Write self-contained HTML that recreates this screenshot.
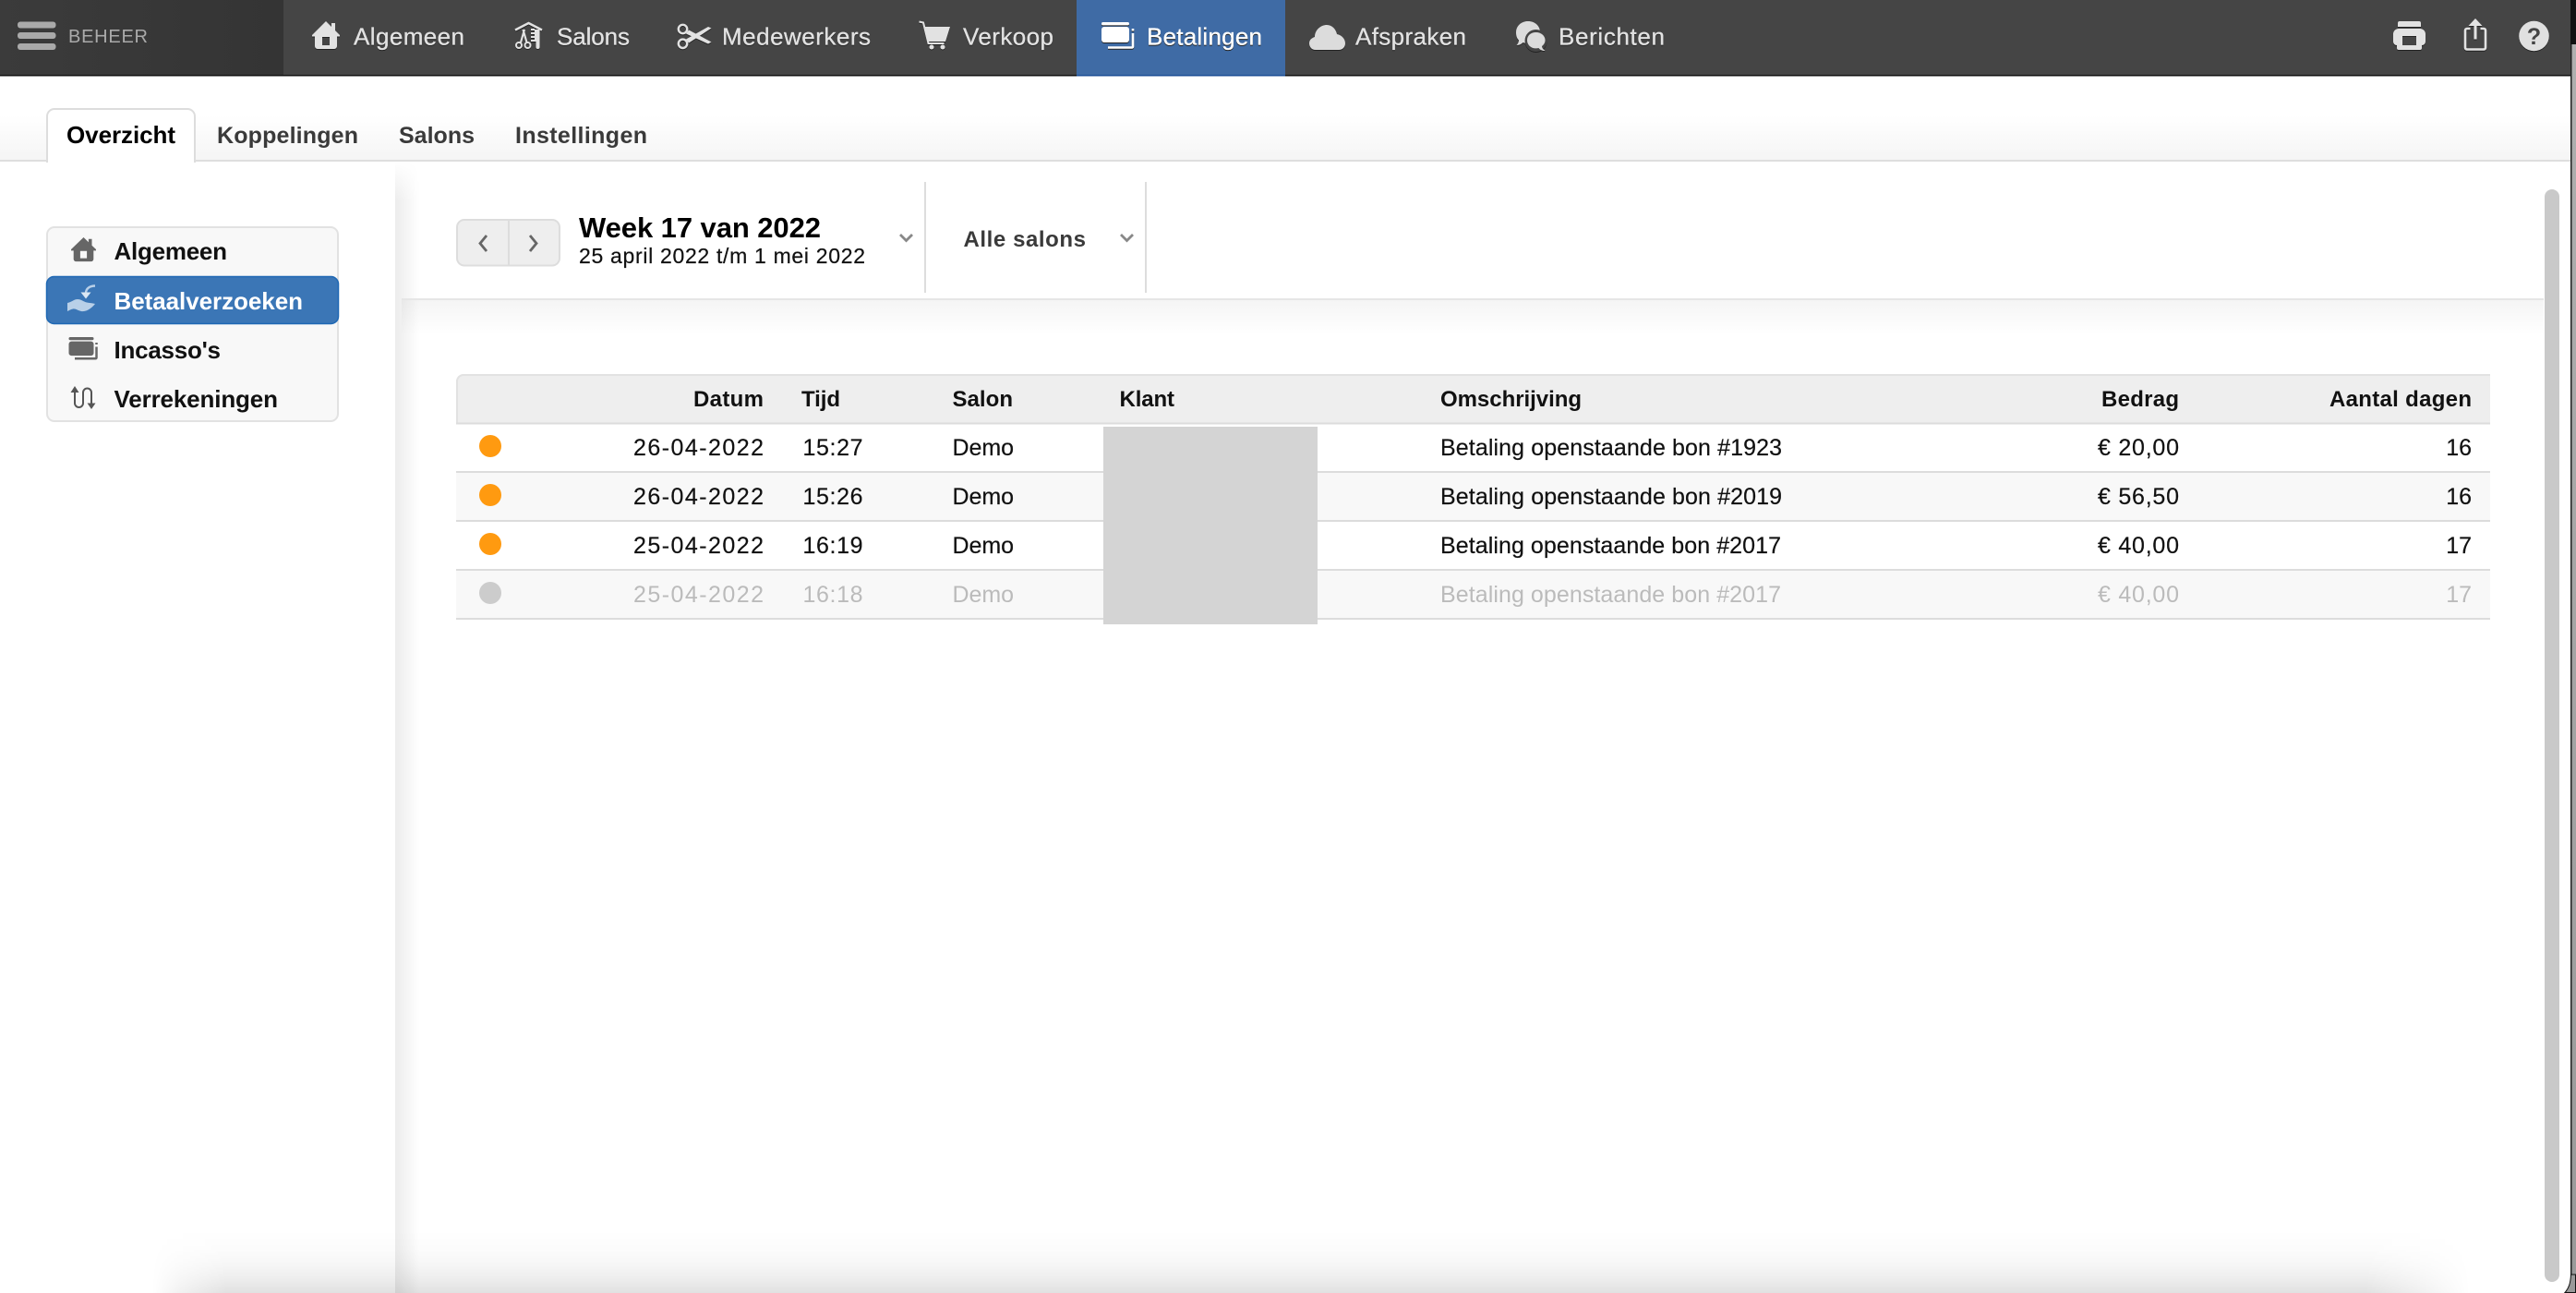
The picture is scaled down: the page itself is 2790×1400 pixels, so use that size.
<!DOCTYPE html>
<html lang="nl">
<head>
<meta charset="utf-8">
<title>Betalingen - Overzicht</title>
<style>
html,body{margin:0;padding:0;width:2790px;height:1400px;overflow:hidden;background:#fff}
svg{display:block;position:absolute;left:0;top:0}
text{font-family:"Liberation Sans",Arial,sans-serif;font-size:25px;fill:#111;stroke:currentColor;stroke-width:0}
.nav text{font-size:26px;fill:#e2e2e2;stroke:#e2e2e2;stroke-width:.3}
.navshadow{filter:drop-shadow(0 1px 0 #222)}
.tab{font-size:25px;font-weight:bold;fill:#3a3a3a}
.side{font-size:26px;font-weight:bold;fill:#111}
.th{font-size:24px;font-weight:bold;fill:#111}
.row{stroke:#111;stroke-width:.2}
.off{fill:#bbb}
</style>
</head>
<body>
<svg width="2790" height="1400" viewBox="0 0 2790 1400" xmlns="http://www.w3.org/2000/svg">
<defs>
<linearGradient id="tabbg" x1="0" y1="0" x2="0" y2="1"><stop offset="0" stop-color="#fff"/><stop offset="1" stop-color="#f5f5f5"/></linearGradient>
<linearGradient id="lefttop" x1="0" y1="0" x2="1" y2="0"><stop offset="0" stop-color="#3b3b3b"/><stop offset="1" stop-color="#343434"/></linearGradient>
<linearGradient id="tool" x1="0" y1="0" x2="0" y2="1"><stop offset="0" stop-color="#000" stop-opacity=".04"/><stop offset="1" stop-color="#000" stop-opacity="0"/></linearGradient>
<linearGradient id="ls" x1="0" y1="0" x2="1" y2="0"><stop offset="0" stop-color="#000" stop-opacity=".075"/><stop offset="1" stop-color="#000" stop-opacity="0"/></linearGradient>
<linearGradient id="lsmask" x1="0" y1="0" x2="0" y2="1"><stop offset="0" stop-color="#000"/><stop offset=".035" stop-color="#fff"/><stop offset="1" stop-color="#fff"/></linearGradient>
<mask id="lm" maskUnits="userSpaceOnUse" x="420" y="175" width="40" height="1225"><rect x="420" y="175" width="40" height="1225" fill="url(#lsmask)"/></mask>
<linearGradient id="edge" x1="0" y1="0" x2="0" y2="1"><stop offset="0" stop-color="#b0b0b0"/><stop offset="1" stop-color="#999"/></linearGradient>
<linearGradient id="bs" x1="0" y1="0" x2="0" y2="1">
<stop offset="0" stop-color="#000" stop-opacity="0"/>
<stop offset=".3" stop-color="#000" stop-opacity=".012"/>
<stop offset=".55" stop-color="#000" stop-opacity=".035"/>
<stop offset=".78" stop-color="#000" stop-opacity=".072"/>
<stop offset="1" stop-color="#000" stop-opacity=".118"/>
</linearGradient>
<linearGradient id="bsm" x1="0" y1="0" x2="1" y2="0">
<stop offset="0" stop-color="#000"/>
<stop offset=".012" stop-color="#777"/>
<stop offset=".032" stop-color="#fff"/>
<stop offset=".955" stop-color="#fff"/>
<stop offset=".98" stop-color="#777"/>
<stop offset="1" stop-color="#000"/>
</linearGradient>
<mask id="bm" maskUnits="userSpaceOnUse" x="165" y="1332" width="2510" height="68"><rect x="165" y="1332" width="2510" height="68" fill="url(#bsm)"/></mask>
</defs>

<!-- window edge -->
<rect x="2784" y="0" width="6" height="1400" fill="url(#edge)"/>
<rect x="2784" y="0" width="6" height="48" fill="#111"/>
<rect x="2784" y="48" width="1.5" height="1335" fill="#222"/>

<!-- tab strip -->
<rect x="0" y="125" width="2784" height="48" fill="url(#tabbg)"/>
<rect x="0" y="173" width="2784" height="2" fill="#dedede"/>
<path d="M51 175V126a8 8 0 0 1 8-8H203a8 8 0 0 1 8 8V175Z" fill="#fff" stroke="#ddd" stroke-width="2"/>
<rect x="52" y="172" width="158" height="4" fill="#fff"/>
<text class="tab" x="72" y="155" textLength="118" style="fill:#000;font-size:26px">Overzicht</text>
<text class="tab" x="235" y="155" textLength="153">Koppelingen</text>
<text class="tab" x="432" y="155" textLength="82">Salons</text>
<text class="tab" x="558" y="155" textLength="143">Instellingen</text>

<!-- left shadow of content panel -->
<rect x="428" y="175" width="26" height="1225" fill="url(#ls)" mask="url(#lm)"/>

<!-- sidebar -->
<rect x="51" y="246" width="315" height="210" rx="8" fill="#f8f8f8" stroke="#e2e2e2" stroke-width="2"/>
<rect x="50.500" y="299.500" width="316" height="51" rx="8" fill="#3b76b6" stroke="#1f68b4" stroke-width="1.500"/>
<path transform="translate(77 257) scale(.9 .87)" fill="#666" fill-rule="evenodd" d="M15 0L21 6V2h4v8l5 5v1.500h-3V27a3 3 0 0 1-3 3H6a3 3 0 0 1-3-3V16.500H0V15ZM11 17v9h8v-9Z"/>
<text class="side" x="123.500" y="281" textLength="122.500">Algemeen</text>
<!-- pay request icon -->
<path d="M103 309.500c-6 0-10 3-10 8" fill="none" stroke="#b9d0e8" stroke-width="2.400"/>
<path d="M87.500 316.500h11l-5.500 7z" fill="#dbe7f3"/>
<path d="M73 328c4-.5 7-4 11-4 4 0 6 2.500 10 3.500 3 .8 6 .5 9 1.500-3 4-9 9-15 8-4-.8-6-3-9-2.500-2 .3-4 1.500-6 2.500z" fill="#b9d0e8"/>
<text class="side" x="123.500" y="335" textLength="204.500" style="fill:#fff">Betaalverzoeken</text>
<!-- cards icon -->
<g transform="translate(74.500 365)">
<rect width="27" height="3.200" rx="1.600" fill="#666"/><rect y="4.600" width="27" height="15.500" rx="3" fill="#666"/>
<path d="M6.500 23.300H29a1 1 0 0 0 1-1V10.500M30 6v2" fill="none" stroke="#666" stroke-width="2.500"/>
</g>
<text class="side" x="123.500" y="388" textLength="115.500">Incasso's</text>
<!-- verrekeningen icon -->
<path d="M81 424V436.500a4.500 4.500 0 0 0 9 0V425a4.500 4.500 0 0 1 9 0V438" fill="none" stroke="#555" stroke-width="2"/>
<path d="M81 418l4.500 7h-9zM99 443l-4.500-6.500h9z" fill="#555"/>
<text class="side" x="123.500" y="441" textLength="177.500">Verrekeningen</text>

<!-- toolbar -->
<rect x="495" y="238" width="111" height="49.500" rx="8" fill="#eee" stroke="#ddd" stroke-width="2"/>
<rect x="550" y="238" width="2" height="49" fill="#ddd"/>
<path d="M527 255l-7 8.500 7 8.500M574 255l7 8.500-7 8.500" fill="none" stroke="#666" stroke-width="2.800"/>
<text x="627" y="257" textLength="262" style="font-size:31px;font-weight:bold;fill:#000">Week 17 van 2022</text>
<text x="627" y="285" textLength="310" style="font-size:23px;fill:#111;stroke:#111;stroke-width:.2">25 april 2022 t/m 1 mei 2022</text>
<path d="M975 254l6.500 6.500 6.500-6.500" fill="none" stroke="#888" stroke-width="2.800"/>
<rect x="1001" y="197" width="2" height="120" fill="#ddd"/>
<text class="tab" x="1043.500" y="267" textLength="132.500" style="font-size:24px">Alle salons</text>
<path d="M1214 254l6.500 6.500 6.500-6.500" fill="none" stroke="#888" stroke-width="2.800"/>
<rect x="1240" y="197" width="2" height="120" fill="#ddd"/>
<rect x="435" y="323" width="2320" height="2" fill="#e6e6e6"/>
<rect x="435" y="325" width="2320" height="38" fill="url(#tool)"/>

<!-- table -->
<path d="M494 459V413a8 8 0 0 1 8-8H2697V459Z" fill="#eee"/>
<path d="M495 459V413a7 7 0 0 1 7-7H2697" fill="none" stroke="#e2e2e2" stroke-width="2"/>
<rect x="494" y="512" width="2203" height="52" fill="#f8f8f8"/>
<rect x="494" y="618" width="2203" height="52" fill="#f8f8f8"/>
<g fill="#dcdcdc">
<rect x="494" y="457.500" width="2203" height="2"/>
<rect x="494" y="510" width="2203" height="2"/>
<rect x="494" y="563" width="2203" height="2"/>
<rect x="494" y="616" width="2203" height="2"/>
<rect x="494" y="669" width="2203" height="2"/>
</g>
<rect x="1195" y="462" width="232" height="214" fill="#d4d4d4"/>

<text class="th" x="751" y="440" textLength="76">Datum</text>
<text class="th" x="868" y="440" textLength="42">Tijd</text>
<text class="th" x="1031.500" y="440" textLength="65.500">Salon</text>
<text class="th" x="1212.500" y="440" textLength="59.500">Klant</text>
<text class="th" x="1560" y="440" textLength="153">Omschrijving</text>
<text class="th" x="2276" y="440" textLength="84">Bedrag</text>
<text class="th" x="2523" y="440" textLength="154">Aantal dagen</text>

<circle cx="531" cy="483" r="12" fill="#ff9a10"/>
<text class="row" x="686" y="493" textLength="141">26-04-2022</text>
<text class="row" x="869.500" y="493" textLength="65">15:27</text>
<text class="row" x="1031.500" y="493" textLength="66.500">Demo</text>
<text class="row" x="1560" y="493" textLength="370">Betaling openstaande bon #1923</text>
<text class="row" x="2272" y="493" textLength="88">€ 20,00</text>
<text class="row" x="2677" y="493" text-anchor="end">16</text>

<circle cx="531" cy="536" r="12" fill="#ff9a10"/>
<text class="row" x="686" y="546" textLength="141">26-04-2022</text>
<text class="row" x="869.500" y="546" textLength="65">15:26</text>
<text class="row" x="1031.500" y="546" textLength="66.500">Demo</text>
<text class="row" x="1560" y="546" textLength="370">Betaling openstaande bon #2019</text>
<text class="row" x="2272" y="546" textLength="88">€ 56,50</text>
<text class="row" x="2677" y="546" text-anchor="end">16</text>

<circle cx="531" cy="589" r="12" fill="#ff9a10"/>
<text class="row" x="686" y="599" textLength="141">25-04-2022</text>
<text class="row" x="869.500" y="599" textLength="65">16:19</text>
<text class="row" x="1031.500" y="599" textLength="66.500">Demo</text>
<text class="row" x="1560" y="599" textLength="369">Betaling openstaande bon #2017</text>
<text class="row" x="2272" y="599" textLength="88">€ 40,00</text>
<text class="row" x="2677" y="599" text-anchor="end">17</text>

<circle cx="531" cy="642" r="12" fill="#ccc"/>
<text class="off" x="686" y="652" textLength="141">25-04-2022</text>
<text class="off" x="869.500" y="652" textLength="65">16:18</text>
<text class="off" x="1031.500" y="652" textLength="66.500">Demo</text>
<text class="off" x="1560" y="652" textLength="369">Betaling openstaande bon #2017</text>
<text class="off" x="2272" y="652" textLength="88">€ 40,00</text>
<text class="off" x="2677" y="652" text-anchor="end">17</text>

<!-- bottom shadow -->
<rect x="165" y="1332" width="2510" height="68" fill="url(#bs)" mask="url(#bm)"/>

<!-- scrollbar -->
<rect x="2756" y="205" width="16" height="1183" rx="8" fill="#c9c9c9"/>

<!-- window corner -->
<path d="M2784.500 1380C2784 1390 2782 1395 2778 1399.500H2789.500V1380Z" fill="#999" stroke="#111" stroke-width="1"/>

<!-- top nav -->
<rect x="0" y="0" width="2784" height="81" fill="#454545"/>
<rect x="0" y="81" width="2784" height="1.500" fill="#111"/>
<rect x="0" y="0" width="307" height="81" fill="url(#lefttop)"/>
<rect x="1166" y="0" width="226" height="81" fill="#3f6ba5"/>
<rect x="1166" y="81" width="226" height="1.500" fill="#1c4f96"/>
<g fill="#aaa">
<rect x="19" y="23.500" width="41.500" height="7" rx="3"/>
<rect x="19" y="35" width="41.500" height="7" rx="3"/>
<rect x="19" y="47" width="41.500" height="7" rx="3"/>
</g>
<text x="74" y="46" textLength="86" style="font-size:20px;fill:#aaa">BEHEER</text>

<g class="nav navshadow">
<!-- home -->
<path transform="translate(338 23)" fill="#e2e2e2" fill-rule="evenodd" d="M15 0L21 6V2h4v8l5 5v1.500h-3V27a3 3 0 0 1-3 3H6a3 3 0 0 1-3-3V16.500H0V15ZM11 17v9h8v-9Z"/>
<text x="383" y="48.500" textLength="120">Algemeen</text>
<!-- salons -->
<path d="M558 32.500L572.500 25 587 32.500" fill="none" stroke="#e2e2e2" stroke-width="2.500"/>
<path d="M564 46L568 32M570.500 46L566.500 32" fill="none" stroke="#e2e2e2" stroke-width="2.200"/>
<circle cx="562" cy="49" r="3" fill="none" stroke="#e2e2e2" stroke-width="2"/>
<circle cx="571.500" cy="49" r="3" fill="none" stroke="#e2e2e2" stroke-width="2"/>
<path d="M579 32h5.500v19a2 2 0 0 1-4 0v-6H575v-2h4v-2h-4v-2h4v-2h-4v-2h4v-2h-4v-2h4Z" fill="#e2e2e2"/>
<text x="603" y="48.500" textLength="79">Salons</text>
<!-- scissors -->
<circle cx="739.500" cy="31.500" r="4.700" fill="none" stroke="#e2e2e2" stroke-width="2.400"/>
<circle cx="739.500" cy="47.300" r="4.700" fill="none" stroke="#e2e2e2" stroke-width="2.400"/>
<path d="M743 42.500L767 29l3.500 1.500L746 46.500ZM743 36.500L746 32.500 770.500 45.500 767 47.500Z" fill="#e2e2e2"/>
<text x="782" y="48.500" textLength="161">Medewerkers</text>
<!-- cart -->
<path d="M995.500 23.500l4.500 1 5.500 22.500h17" fill="none" stroke="#e2e2e2" stroke-width="2"/>
<path d="M1001 29H1029L1024 45H1005Z" fill="#e2e2e2"/>
<circle cx="1009" cy="51" r="2.500" fill="#e2e2e2"/><circle cx="1021" cy="51" r="2.500" fill="#e2e2e2"/>
<text x="1043" y="48.500" textLength="98">Verkoop</text>
<!-- cards active -->
<g transform="translate(1193 24)">
<rect width="30" height="3.400" rx="1.700" fill="#fff"/><rect y="5" width="30" height="17" rx="3" fill="#fff"/>
<path d="M7 27.500H33a1 1 0 0 0 1-1V12M34 7v2.500" fill="none" stroke="#fff" stroke-width="2.600"/>
</g>
<text x="1242" y="48.500" textLength="125" style="fill:#fff;stroke:#fff">Betalingen</text>
<!-- cloud -->
<path d="M1425 54C1420 54 1418 50 1418 47C1418 43 1421 41 1424 40C1424 32 1431 27 1437 27C1443 27 1447 32 1448 37C1453 38 1457 42 1457 47C1457 51 1454 54 1450 54Z" fill="#dcdcdc"/>
<text x="1468" y="48.500" textLength="120">Afspraken</text>
<!-- chat -->
<path d="M1655 23c7.500 0 13 5 13 12 0 7-5.500 12-13 12-2 0-4-.4-5.500-1-1.500 1.500-4 3-7 3 1.500-1.500 2.500-3.500 2.500-5.500-2.500-2.200-3-5.500-3-8.500 0-7 5.500-12 13-12Z" fill="#dcdcdc"/>
<circle cx="1663.500" cy="44" r="12" fill="#454545"/>
<path d="M1663.500 35c5.800 0 10 3.800 10 8.500 0 2.800-1.500 5-3.500 6.500 0 2 1.500 3.500 3.500 5-3 0-5.500-1-7-3-1 .2-2 .4-3 .4-5.500 0-9.500-3.900-9.500-8.900s4-8.500 9.500-8.500Z" fill="#dcdcdc"/>
<text x="1688" y="48.500" textLength="115">Berichten</text>
<!-- printer -->
<path d="M2599 23h21a2 2 0 0 1 2 2v4h-25v-4a2 2 0 0 1 2-2Z" fill="#e2e2e2"/>
<path fill="#e2e2e2" fill-rule="evenodd" d="M2598 31h23a6 6 0 0 1 6 6v8a4 4 0 0 1-4 4v3a2 2 0 0 1-2 2h-23a2 2 0 0 1-2-2v-3a4 4 0 0 1-4-4v-8a6 6 0 0 1 6-6ZM2602 39v10h15v-10Z"/>
<!-- share -->
<path d="M2675.500 31h-3.500a2 2 0 0 0-2 2v18.500a2 2 0 0 0 2 2h18a2 2 0 0 0 2-2V33a2 2 0 0 0-2-2h-3.500" fill="none" stroke="#e2e2e2" stroke-width="2.600"/>
<path d="M2681 42.500V25" fill="none" stroke="#e2e2e2" stroke-width="3"/>
<path d="M2681 20l7.500 8h-15Z" fill="#e2e2e2"/>
<!-- help -->
<circle cx="2744.500" cy="39" r="16.300" fill="#e0e0e0"/>
<text x="2744.500" y="48" text-anchor="middle" style="font-size:25px;font-weight:bold;fill:#444;stroke-width:0">?</text>
</g>
</svg>
</body>
</html>
